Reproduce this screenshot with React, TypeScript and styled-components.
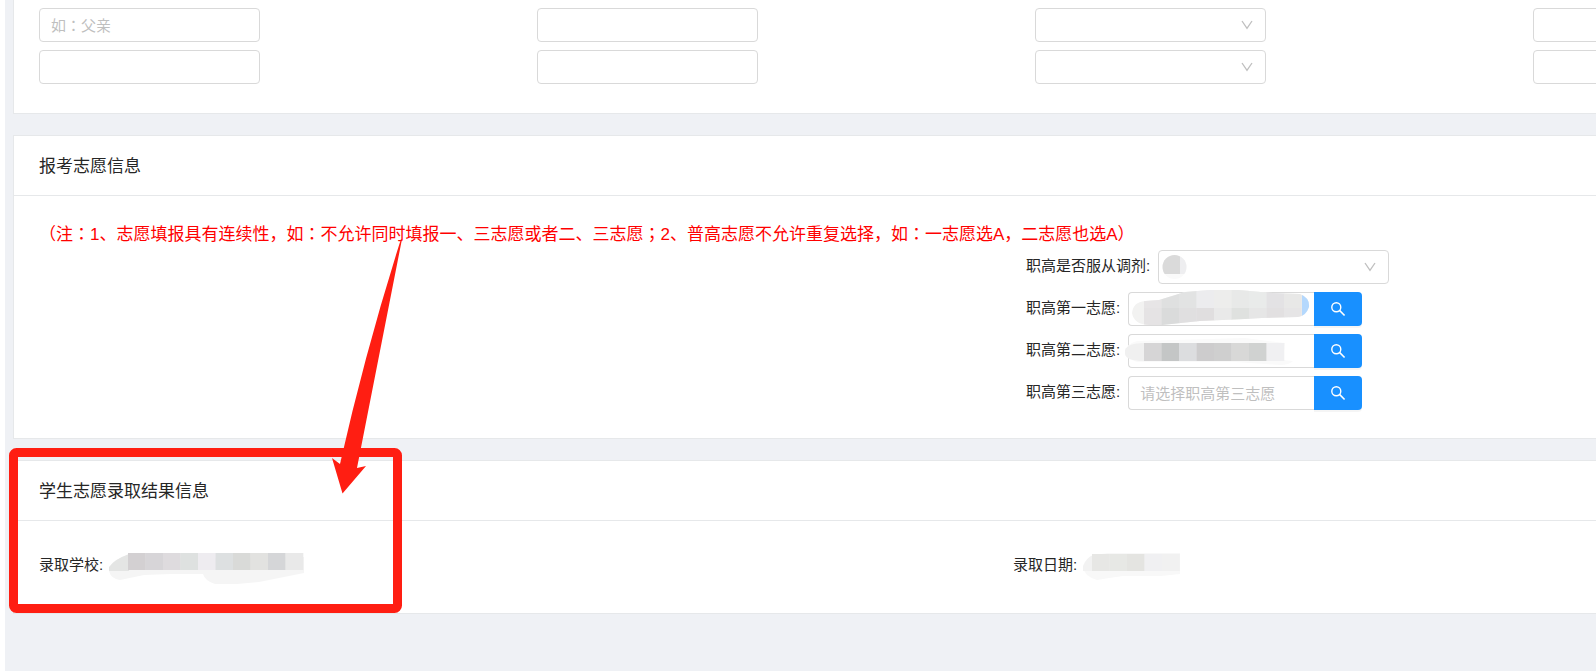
import React from 'react';
import styled, { createGlobalStyle } from 'styled-components';

const GlobalStyle = createGlobalStyle`
  * { box-sizing: border-box; }
  body {
    margin: 0;
    background: #eff1f5;
    color: #262626;
    font-family: "Liberation Sans", "Noto Sans CJK SC", sans-serif;
    font-size: 15px;
  }
  input, select, button { font: inherit; color: inherit; }
`;

const Page = styled.div`
  position: relative;
  min-height: 100vh;
  overflow: hidden;
  padding-left: 8px;
  border-left: 5px solid #fff;
`;

const Content = styled.main`
  display: flex;
  flex-direction: column;
  gap: 21px;
  min-width: 2000px;
`;

const Card = styled.section<{ $cut?: boolean }>`
  background: #fff;
  border: 1px solid #e6e8ea;
  border-top-width: ${p => (p.$cut ? 0 : 1)}px;
`;

const CardTitle = styled.h2`
  margin: 0;
  padding: 3px 25px 0;
  font-size: 17px;
  font-weight: 400;
  line-height: 56px;
  border-bottom: 1px solid #e6e8ea;
`;

const ParentGrid = styled.div`
  display: grid;
  grid-template-columns: repeat(4, 1fr);
  gap: 8px 44px;
  padding: 8px 25px 29px;
`;

const TextInput = styled.input<{ $width?: number; $joined?: boolean }>`
  width: ${p => p.$width ?? 221}px;
  height: 34px;
  padding: 0 11px;
  border: 1px solid #d9d9d9;
  border-right-width: ${p => (p.$joined ? 0 : 1)}px;
  border-radius: ${p => (p.$joined ? '4px 0 0 4px' : '4px')};
  background: #fff;
  outline: none;
  &::placeholder { color: #bfbfbf; opacity: 1; }
`;

const RelationInput = styled(TextInput)`
  font-family: "Liberation Sans", "Noto Sans CJK JP", sans-serif;
`;

const SelectWrap = styled.div`
  position: relative;
  width: 231px;
  height: 34px;
`;

const NativeSelect = styled.select`
  appearance: none;
  display: block;
  width: 100%;
  height: 100%;
  padding: 0 11px;
  border: 1px solid #d9d9d9;
  border-radius: 4px;
  background: #fff;
  outline: none;
`;

const Arrow = styled.svg`
  position: absolute;
  top: 12px;
  right: 13px;
  width: 12px;
  height: 10px;
  pointer-events: none;
`;

const WishBody = styled.div`
  padding: 26px 25px 28px;
`;

const Notice = styled.p`
  margin: 0 0 2px;
  color: #f00;
  font-size: 17px;
  line-height: 26px;
  white-space: nowrap;
`;

const CentredMark = styled.span`
  font-family: "Noto Sans CJK JP", sans-serif;
  line-height: 1;
`;

const HalfGrid = styled.div`
  display: grid;
  grid-template-columns: 1fr 1fr;
  column-gap: 26px;
`;

const Fields = styled.div`
  grid-column: 2;
  display: flex;
  flex-direction: column;
  gap: 8px;
`;

const Field = styled.div`
  display: flex;
  align-items: flex-start;
`;

const Label = styled.label`
  margin-right: 8px;
  line-height: 32px;
`;

const SearchBox = styled.div`
  position: relative;
  display: flex;
`;

const SearchButton = styled.button`
  display: flex;
  align-items: center;
  justify-content: center;
  width: 48px;
  height: 34px;
  padding: 0;
  border: 0;
  border-radius: 0 4px 4px 0;
  background: #1890ff;
  color: #fff;
  box-shadow: 0 2px 0 rgba(0, 0, 0, 0.04);
`;

const ResultGrid = styled.dl`
  display: grid;
  grid-template-columns: 1fr 1fr;
  margin: 0;
  padding: 28px 25px 32px;
`;

const Result = styled.div`
  display: flex;
  align-items: flex-start;
  height: 32px;
`;

const Term = styled.dt`
  line-height: 32px;
`;

const Value = styled.dd`
  margin: 0;
  padding: 4px 0 0 6px;
`;

const Smudge = styled.svg`
  display: block;
`;

const SmudgeOver = styled.svg<{ $left: number; $top: number }>`
  position: absolute;
  left: ${p => p.$left}px;
  top: ${p => p.$top}px;
  pointer-events: none;
`;

const Markup = styled.svg`
  position: absolute;
  left: 0;
  top: 0;
  pointer-events: none;
`;

function Select({ id, label, children }: { id?: string; label?: string; children?: React.ReactNode }) {
  return (
    <SelectWrap>
      <NativeSelect id={id} aria-label={label} defaultValue="">
        <option value="" />
      </NativeSelect>
      {children}
      <Arrow viewBox="0 0 12 10" fill="none" stroke="#bfbfbf" strokeWidth="1.3">
        <path d="M1 1 L6 8.3 L11 1" />
      </Arrow>
    </SelectWrap>
  );
}

function SearchIcon() {
  return (
    <svg width="16" height="16" viewBox="0 0 16 16" fill="none" stroke="#fff" strokeWidth="1.4" aria-hidden="true">
      <circle cx="6.3" cy="6.2" r="4.5" />
      <path d="M9.5 9.4 L14.6 14.5" strokeWidth="1.6" />
    </svg>
  );
}

function Wish({ id, label, placeholder, children }: { id: string; label: string; placeholder?: string; children?: React.ReactNode }) {
  return (
    <Field>
      <Label htmlFor={id}>{label}:</Label>
      <SearchBox>
        <TextInput id={id} $width={186} $joined placeholder={placeholder} />
        <SearchButton type="button" aria-label="搜索"><SearchIcon /></SearchButton>
        {children}
      </SearchBox>
    </Field>
  );
}

// Colons and semicolons sit in the middle of their full-width cell.
function NoticeText({ text }: { text: string }) {
  return (
    <Notice>
      {text.split(/([：；])/).map((part, i) => (i % 2 ? <CentredMark key={i}>{part}</CentredMark> : part))}
    </Notice>
  );
}

function Blocks({ x, y, w, h, colors }: { x: number; y: number; w: number; h: number; colors: string[] }) {
  return (
    <>
      {colors.map((c, i) => (
        <rect key={i} x={x + i * w} y={y} width={w + 0.3} height={h} fill={c} />
      ))}
    </>
  );
}

export default function App() {
  return (
    <Page>
      <GlobalStyle />
      <Content>
        <Card $cut>
          <ParentGrid>
            {[0, 1].map(row => (
              <React.Fragment key={row}>
                <RelationInput aria-label="关系" placeholder={row === 0 ? '如：父亲' : undefined} />
                <TextInput aria-label="姓名" />
                <Select label="类型" />
                <TextInput aria-label="电话" />
              </React.Fragment>
            ))}
          </ParentGrid>
        </Card>

        <Card>
          <CardTitle>报考志愿信息</CardTitle>
          <WishBody>
            <NoticeText text="（注：1、志愿填报具有连续性，如：不允许同时填报一、三志愿或者二、三志愿；2、普高志愿不允许重复选择，如：一志愿选A，二志愿也选A）" />
            <HalfGrid>
              <Fields>
                <Field>
                  <Label htmlFor="adjust">职高是否服从调剂:</Label>
                  <Select id="adjust">
                    <SmudgeOver $left={4} $top={5} width="26" height="24" viewBox="0 0 26 24">
                      <clipPath id="dot"><circle cx="12.5" cy="12" r="12" /></clipPath>
                      <g clipPath="url(#dot)">
                        <rect width="26" height="24" fill="#fafafa" />
                        <rect width="18" height="19" fill="#dadada" />
                        <rect x="18" width="8" height="19" fill="#eeeef0" />
                      </g>
                    </SmudgeOver>
                  </Select>
                </Field>
                <Wish id="wish1" label="职高第一志愿">
                  <SmudgeOver $left={4} $top={-2} width="178" height="36" viewBox="0 0 178 36">
                    <clipPath id="stroke1">
                      <path d="M0 23 Q1 12 13 11 L27 10 L53 2 L78 0 L107 0 L140 3 L168 4 Q178 8 177 17 Q174 26 166 27 L130 28 L113 29 L68 31 L30 35 L18 35 Q2 35 0 23Z" />
                    </clipPath>
                    <g clipPath="url(#stroke1)">
                      <rect width="178" height="36" fill="#f2f2f1" />
                      <Blocks x={12} y={0} w={17.5} h={18} colors={['#e7e5e6', '#dfe0e0', '#e2e3e3', '#ececee', '#ededec', '#e8e9e8', '#e9ebea', '#e3e2e4', '#e8e8e7']} />
                      <Blocks x={12} y={18} w={17.5} h={18} colors={['#e5e3e4', '#dadbdb', '#e0dfe0', '#e0dedf', '#e9e9e9', '#dfe1df', '#e6e6e6', '#e2e0e1', '#e6e5e6']} />
                      <rect x="170" width="8" height="36" fill="#b4d8fd" />
                    </g>
                  </SmudgeOver>
                </Wish>
                <Wish id="wish2" label="职高第二志愿">
                  <SmudgeOver $left={-3} $top={4} width="168" height="28" viewBox="0 0 168 28">
                    <path d="M0 13 Q3 5 12 3 L120 0 L160 5 L158 22 L168 23 Q164 27 155 27 L110 24 L12 24 Q1 21 0 13Z" fill="#fafafa" />
                    <path d="M0 12 Q3 5 19 5 L19 23 Q1 23 0 16Z" fill="#f0f0f0" />
                    <Blocks x={19} y={5} w={17.5} h={18} colors={['#d6d5d6', '#c4c6c6', '#dcdddf', '#cdcccd', '#cfcfcf', '#d8d8d7', '#d0d2d1', '#f0f0f2']} />
                  </SmudgeOver>
                </Wish>
                <Wish id="wish3" label="职高第三志愿" placeholder="请选择职高第三志愿" />
              </Fields>
            </HalfGrid>
          </WishBody>
        </Card>

        <Card>
          <CardTitle>学生志愿录取结果信息</CardTitle>
          <ResultGrid>
            <Result>
              <Term>录取学校:</Term>
              <Value>
                <Smudge width="196" height="32" viewBox="0 0 196 32">
                  <path d="M0 18 Q1 8 12 5 L195 4 L195 20 L150 29 L128 31 L106 31 Q96 28 94 21 L62 21 L35 22 L11 27 Q2 26 0 18Z" fill="#f5f5f5" />
                  <path d="M0 14 Q6 6 20 1 L20 18 L0 18Z" fill="#e4e5e4" />
                  <Blocks x={19} y={0} w={17.5} h={17} colors={['#d3d0d2', '#d7d5d8', '#dedbde', '#dee1e0', '#eeecf0', '#dde0e1', '#d9dad8', '#e2e2e0', '#d5d6d8', '#e9e9e9']} />
                </Smudge>
              </Value>
            </Result>
            <Result>
              <Term>录取日期:</Term>
              <Value>
                <Smudge width="98" height="32" viewBox="0 0 98 32">
                  <path d="M0 14 Q3 5 12 2 L25 0 L97 0 L97 21 L78 23 L40 23 L26 25 L14 27 Q1 23 0 14Z" fill="#f8f8f8" />
                  <path d="M0 13 Q3 5 10 2 L10 18 L0 18Z" fill="#f2f2f2" />
                  <Blocks x={9} y={1} w={17.5} h={17} colors={['#e7e7e5', '#e7e8e5', '#e4e4e1', '#f0f0f2', '#f1f1f1']} />
                </Smudge>
              </Value>
            </Result>
          </ResultGrid>
        </Card>
      </Content>

      <Markup width="440" height="640" viewBox="5 0 440 640" aria-hidden="true">
        <rect x="13.5" y="452.5" width="384" height="156" rx="3" fill="none" stroke="#ff1e12" strokeWidth="9" />
        <path d="M401 239 L402 239 L357 468 L366 466 L342.5 493.5 L332 458 L340 464 Q366 349 401 239Z" fill="#ff1e12" />
      </Markup>
    </Page>
  );
}
